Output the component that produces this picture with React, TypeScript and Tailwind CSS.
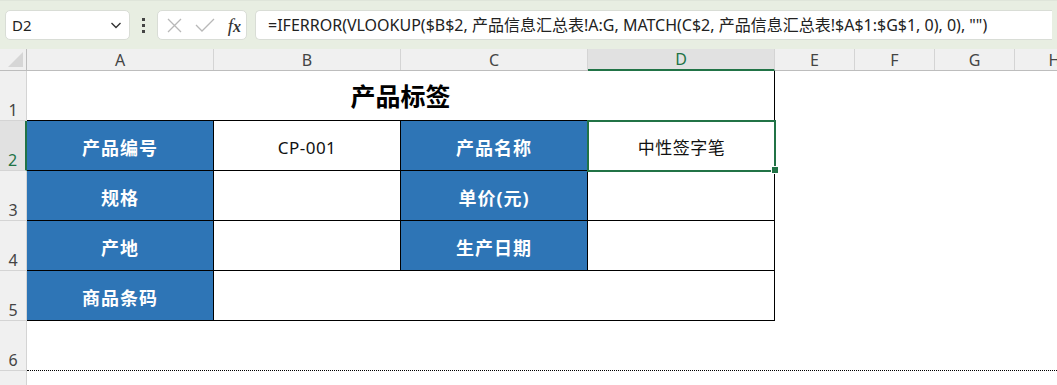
import React from 'react';

const FONT = { fontFamily: '"Noto Sans", "Noto Sans CJK SC", sans-serif' };

const cols = [
  { key: 'A', w: 187 },
  { key: 'B', w: 187 },
  { key: 'C', w: 187 },
  { key: 'D', w: 187 },
  { key: 'E', w: 80 },
  { key: 'F', w: 80 },
  { key: 'G', w: 80 },
  { key: 'H', w: 80 },
];

function Toolbar() {
  return (
    <div className="h-[49px] bg-[#e8eee2] flex items-center gap-0 px-[5px] border-t border-[#dfe5da]">
      <div className="w-[125px] h-[30px] bg-white rounded-[5px] border border-[#d9ddd6] flex items-center justify-between pl-[6px] pr-[6px]">
        <span className="text-[15px] text-[#222]">D2</span>
        <svg width="14" height="14" viewBox="0 0 14 14" fill="none" stroke="#333" strokeWidth="1.4">
          <path d="M2.5 5 L7 9.5 L11.5 5" />
        </svg>
      </div>
      <div className="w-[27px] flex flex-col items-center gap-[3px]">
        <span className="w-[3px] h-[3px] bg-[#444]" />
        <span className="w-[3px] h-[3px] bg-[#444]" />
        <span className="w-[3px] h-[3px] bg-[#444]" />
      </div>
      <div className="w-[90px] h-[30px] bg-white rounded-[5px] border border-[#d9ddd6] flex items-center justify-between pl-[8px] pr-[5px]">
        <svg width="17" height="17" viewBox="0 0 17 17" fill="none" stroke="#b8b8b8" strokeWidth="1.3">
          <path d="M2 2 L15 15 M15 2 L2 15" />
        </svg>
        <svg width="20" height="17" viewBox="0 0 20 17" fill="none" stroke="#b8b8b8" strokeWidth="1.3">
          <path d="M1 8 L7 14 L19 2" />
        </svg>
        <span className="text-[19px] text-[#333] italic leading-none" style={{ fontFamily: '"Liberation Serif", serif' }}>
          <span className="font-normal">f</span>
          <span className="font-bold text-[16px]">x</span>
        </span>
      </div>
      <div className="ml-[8px] flex-1 h-[30px] bg-white rounded-l-[5px] border border-r-0 border-[#d9ddd6] flex items-center pl-[12px] overflow-hidden whitespace-nowrap">
        <span className="text-[16px] text-[#222]">
          =IFERROR(VLOOKUP($B$2, 产品信息汇总表!A:G, MATCH(C$2, 产品信息汇总表!$A$1:$G$1, 0), 0), "")
        </span>
      </div>
    </div>
  );
}

function ColumnHeader() {
  return (
    <div className="flex h-[22px] bg-[#f0f0f0] border-b border-[#bdbdbd]">
      <div className="w-[27px] shrink-0 border-r border-[#bdbdbd] relative">
        <svg className="absolute right-[3px] bottom-[3px]" width="15" height="15" viewBox="0 0 15 15">
          <path d="M15 0 L15 15 L0 15 Z" fill="#d6d6d6" />
        </svg>
      </div>
      {cols.map((c) => {
        const active = c.key === 'D';
        return (
          <div
            key={c.key}
            style={{ width: c.w }}
            className={
              active
                ? 'shrink-0 flex items-center justify-center text-[16px] text-[#217346] bg-[#e1e1e1] border-r border-[#d4d4d4] border-b-2 border-b-[#217346] -mb-px'
                : 'shrink-0 flex items-center justify-center text-[16px] text-[#444] border-r border-[#d4d4d4]'
            }
          >
            {c.key}
          </div>
        );
      })}
    </div>
  );
}

function RowHeader({ n, active }: { n?: number; active?: boolean }) {
  return (
    <div
      className={
        active
          ? 'w-[27px] shrink-0 h-full bg-[#e1e1e1] border-r-2 border-r-[#217346] border-b border-[#d4d4d4] flex items-end justify-center text-[16px] leading-[20px] text-[#217346]'
          : 'w-[27px] shrink-0 h-full bg-[#f0f0f0] border-r border-[#bdbdbd] border-b border-[#d4d4d4] flex items-end justify-center text-[16px] leading-[20px] text-[#444]'
      }
    >
      {n}
    </div>
  );
}

function Label({ text, w = 187 }: { text: string; w?: number }) {
  return (
    <div
      style={{ width: w }}
      className="shrink-0 h-full bg-[#2e75b6] border-r border-b border-black flex items-center justify-center pt-[5px] text-white text-[18px] tracking-[1px] font-bold"
    >
      {text}
    </div>
  );
}

function Value({ text, w = 187 }: { text?: string; w?: number }) {
  return (
    <div
      style={{ width: w }}
      className="shrink-0 h-full bg-white border-r border-b border-black flex items-center justify-center pt-[5px] text-[#111] text-[17px] tracking-[0.5px]"
    >
      {text}
    </div>
  );
}

export default function App() {
  return (
    <div className="w-[1057px] h-[385px] overflow-hidden bg-white" style={FONT}>
      <Toolbar />
      <ColumnHeader />
      <div className="flex h-[50px]">
        <RowHeader n={1} />
        <div className="w-[748px] shrink-0 h-full border-r border-b border-black flex items-center justify-center pt-[2px] text-[25px] font-bold text-black">
          产品标签
        </div>
      </div>
      <div className="flex h-[50px]">
        <RowHeader n={2} active />
        <Label text="产品编号" />
        <Value text="CP-001" />
        <Label text="产品名称" />
        <div className="w-[187px] shrink-0 h-full relative bg-white border-b border-black flex items-center justify-center pt-[5px] text-[#111] text-[17px] tracking-[0.5px]">
          中性签字笔
          <div className="absolute -left-px -top-px w-[189px] h-[52px] border-2 border-[#217346]" />
          <div className="absolute -right-[4px] -bottom-[4px] w-[6px] h-[6px] bg-[#217346] border border-white box-content" />
        </div>
      </div>
      <div className="flex h-[50px]">
        <RowHeader n={3} />
        <Label text="规格" />
        <Value />
        <Label text="单价(元)" />
        <Value />
      </div>
      <div className="flex h-[50px]">
        <RowHeader n={4} />
        <Label text="产地" />
        <Value />
        <Label text="生产日期" />
        <Value />
      </div>
      <div className="flex h-[50px]">
        <RowHeader n={5} />
        <Label text="商品条码" />
        <Value w={561} />
      </div>
      <div className="flex h-[50px]">
        <RowHeader n={6} />
        <div className="flex-1 h-full border-b border-dotted border-black" />
      </div>
      <div className="flex h-[50px]">
        <RowHeader />
      </div>
    </div>
  );
}
